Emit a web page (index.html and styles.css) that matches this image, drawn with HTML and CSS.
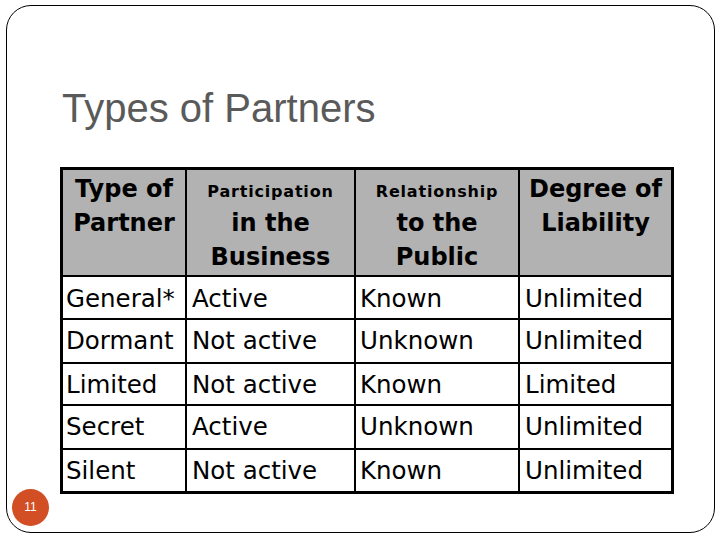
FILE: index.html
```html
<!DOCTYPE html>
<html lang="en">
<head>
<meta charset="utf-8">
<title>Types of Partners</title>
<link rel="stylesheet" href="styles.css">
</head>
<body>
<div class="slide">
  <h1 class="title">Types of Partners</h1>
  <div class="table">
    <div class="th"><div>Type of</div><div>Partner</div></div>
    <div class="th"><div><span class="sm">Participation</span></div><div>in the</div><div>Business</div></div>
    <div class="th"><div><span class="sm">Relationship</span></div><div>to the</div><div>Public</div></div>
    <div class="th"><div>Degree of</div><div>Liability</div></div>

    <div class="td c1 first">General*</div>
    <div class="td c2 first">Active</div>
    <div class="td c3 first">Known</div>
    <div class="td c4 first">Unlimited</div>

    <div class="td c1">Dormant</div>
    <div class="td c2">Not active</div>
    <div class="td c3">Unknown</div>
    <div class="td c4">Unlimited</div>

    <div class="td c1">Limited</div>
    <div class="td c2">Not active</div>
    <div class="td c3">Known</div>
    <div class="td c4">Limited</div>

    <div class="td c1">Secret</div>
    <div class="td c2">Active</div>
    <div class="td c3">Unknown</div>
    <div class="td c4">Unlimited</div>

    <div class="td c1">Silent</div>
    <div class="td c2">Not active</div>
    <div class="td c3">Known</div>
    <div class="td c4">Unlimited</div>
  </div>
  <div class="badge">11</div>
</div>
</body>
</html>
```

FILE: styles.css
```css
html, body {
  margin: 0;
  padding: 0;
  background: #ffffff;
}

body {
  width: 720px;
  height: 540px;
  overflow: hidden;
  font-family: "Liberation Sans", Arial, sans-serif;
}

.slide {
  position: relative;
  box-sizing: border-box;
  margin: 5px 0 0 6px;
  width: 709px;
  height: 528px;
  border: 1px solid #000000;
  border-radius: 25px;
}

.title {
  margin: 0;
  padding: 78px 0 0 55px;
  font-family: "Liberation Sans", Arial, sans-serif;
  font-weight: normal;
  font-size: 40px;
  line-height: 48px;
  color: #5a5a5a;
}

.table {
  display: grid;
  grid-template-columns: 122px 167px 162px 151px;
  grid-template-rows: 105px 41px 42px 40px 42px 41px;
  gap: 2px;
  width: max-content;
  margin: 35px 0 0 53px;
  border: 3px solid #000000;
  background: #000000;
  font-family: "DejaVu Sans", Verdana, sans-serif;
  color: #000000;
}

.th {
  background: #b2b2b2;
  text-align: center;
  font-weight: bold;
  font-size: 24px;
  line-height: 34px;
  padding-top: 2px;
  white-space: nowrap;
}

.sm {
  font-size: 16px;
  letter-spacing: 0.8px;
  line-height: 1;
}

.td {
  background: #ffffff;
  font-size: 24.5px;
  line-height: 41px;
  white-space: nowrap;
  overflow: hidden;
}

.td.first {
  line-height: 39px;
  padding-top: 2px;
}

.c1 { padding-left: 3px; }
.c2 { padding-left: 5px; }
.c3 { padding-left: 4px; }
.c4 { padding-left: 5px; }

.badge {
  position: absolute;
  left: 5px;
  top: 483px;
  width: 37px;
  height: 37px;
  border-radius: 50%;
  background: #d24f26;
  color: #ffffff;
  font-family: "Liberation Sans", Arial, sans-serif;
  font-size: 12px;
  line-height: 37px;
  text-align: center;
}
```
